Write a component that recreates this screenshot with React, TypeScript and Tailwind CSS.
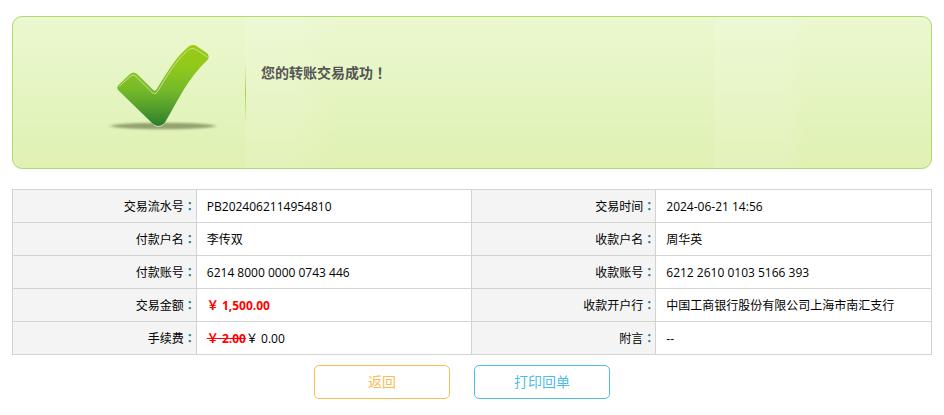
import React from 'react';

type Field = { label: string; value: React.ReactNode };

const rows: [Field, Field][] = [
  [
    { label: '交易流水号', value: 'PB2024062114954810' },
    { label: '交易时间', value: '2024-06-21 14:56' },
  ],
  [
    { label: '付款户名', value: '李传双' },
    { label: '收款户名', value: '周华英' },
  ],
  [
    { label: '付款账号', value: '6214 8000 0000 0743 446' },
    { label: '收款账号', value: '6212 2610 0103 5166 393' },
  ],
  [
    { label: '交易金额', value: <strong className="font-bold text-[#ff0000]">￥ 1,500.00</strong> },
    { label: '收款开户行', value: '中国工商银行股份有限公司上海市南汇支行' },
  ],
  [
    {
      label: '手续费',
      value: (
        <>
          <del className="font-bold text-[#ff0000]">￥ 2.00</del>
          <span>￥ 0.00</span>
        </>
      ),
    },
    { label: '附言', value: '--' },
  ],
];

const SuccessIcon: React.FC = () => (
  <svg width="116" height="96" viewBox="0 0 116 96" aria-hidden="true">
    <defs>
      <linearGradient id="check" x1="0" y1="0" x2="0" y2="1">
        <stop offset="0" stopColor="#9acb12" />
        <stop offset="0.25" stopColor="#92c91b" />
        <stop offset="0.55" stopColor="#76ba29" />
        <stop offset="0.75" stopColor="#58a22c" />
        <stop offset="1" stopColor="#2b7d2e" />
      </linearGradient>
      <filter id="soft" x="-20%" y="-100%" width="140%" height="300%">
        <feGaussianBlur stdDeviation="2.5 1.2" />
      </filter>
    </defs>
    <ellipse cx="58" cy="86" rx="52" ry="3.2" fill="#6f8050" fillOpacity="0.7" filter="url(#soft)" />
    <path
      d="M13.5 50.5 Q11 48 13.5 45 L25 34 Q28.500 31 32 34 L48.500 50.300 Q50 51.500 51.500 49.500 C61 34.500 69 19 83 7 Q87 3.500 91.500 6 L101 12.500 Q105.500 15.500 102.500 20 C82 39 74 59 60.500 81.500 Q55 90 46.500 82.500 Z"
      fill="url(#check)"
    />
    <path
      d="M14 46.500 L25.500 36.200 Q28.500 33.800 31 36.500 L47.500 52.800 Q50 55 52 52.200 C61.500 37.500 69.500 21.500 83.500 9.800 Q87 7 90.500 9.300 L102.500 17"
      fill="none"
      stroke="#c3e39a"
      strokeWidth="1"
    />
    <path d="M48.500 85 Q54.500 88.500 59.500 83.800" fill="none" stroke="#cbd8b4" strokeWidth="1" />
  </svg>
);

const Cell: React.FC<Field> = ({ label, value }) => (
  <>
    <th scope="row" className="h-[33px] border border-[#d3d3d3] bg-[#f4f4f4] p-0 pt-px text-right font-normal">
      {label}
      <span className="font-['Noto_Sans_CJK_TC',sans-serif] font-bold text-[#2f7f8f]">：</span>
    </th>
    <td className="h-[33px] border border-[#d3d3d3] bg-white px-2.5 pt-0.5 pb-0">{value}</td>
  </>
);

export default function App() {
  return (
    <main className="bg-white px-3 pt-4 pb-4 font-['Open_Sans','Noto_Sans_CJK_SC',sans-serif] text-xs text-black">
      <section className="flex h-[153px] overflow-hidden rounded-[10px] border border-[#b0d873] bg-linear-to-b from-[#ebf8d0] to-[#dff1b2]">
        <div className="flex w-[233px] shrink-0 pt-[23px] pl-[92px]">
          <SuccessIcon />
        </div>
        <div className="mt-[46px] h-[60px] w-px -ml-px shrink-0 bg-linear-to-b from-transparent via-[#a5d251] to-transparent" />
        <div className="flex flex-1">
          <div className="w-[468px] bg-linear-to-r from-white/10 from-10% to-transparent to-20% pt-[45px] pl-[15px]">
            <h1 className="text-sm leading-5 font-bold text-[#555555]">
              您的转账交易成功<span className="font-['Noto_Sans_CJK_TC',sans-serif]">！</span>
            </h1>
          </div>
          <div className="w-[92px] bg-linear-to-r from-white/10 from-80% to-transparent" />
        </div>
      </section>

      <table className="mt-5 w-full table-fixed border-collapse">
        <colgroup>
          <col className="w-1/5" />
          <col className="w-[30%]" />
          <col className="w-1/5" />
          <col className="w-[30%]" />
        </colgroup>
        <tbody>
          {rows.map(([left, right]) => (
            <tr key={left.label}>
              <Cell {...left} />
              <Cell {...right} />
            </tr>
          ))}
        </tbody>
      </table>

      <div className="flex justify-center gap-6 pt-2.5 pr-5 text-sm">
        <button type="button" className="h-[34px] w-[136px] cursor-pointer rounded-[5px] border border-[#fbbc55] bg-white text-[#fbbc55]">
          返回
        </button>
        <button type="button" className="h-[34px] w-[136px] cursor-pointer rounded-[5px] border border-[#4fbdea] bg-white text-[#4fbdea]">
          打印回单
        </button>
      </div>
    </main>
  );
}
